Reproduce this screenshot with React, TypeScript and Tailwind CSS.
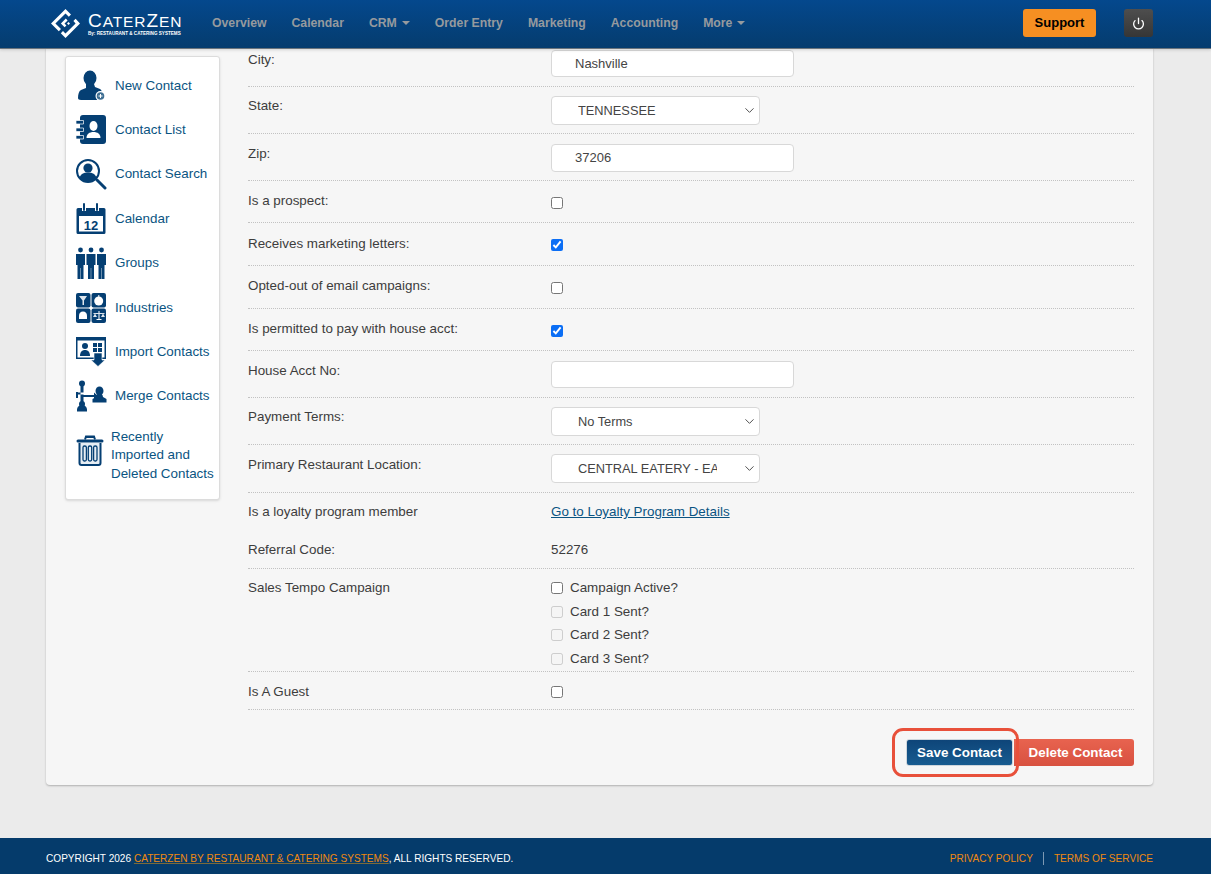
import { ChevronDown, Power } from "lucide-react";
import type { ReactNode } from "react";

const NAV = ["Overview", "Calendar", "CRM", "Order Entry", "Marketing", "Accounting", "More"];

const Logo = () => (
  <div className="flex items-center gap-[8px]">
    <svg width="29" height="29" viewBox="0 0 29 29" fill="#fff">
      <path d="M14.500 0 20 5.500 17.800 7.700 14.500 4.400 4.400 14.500 10 20 7.800 22.300 0 14.500Z" />
      <path d="M24.600 9.700 29 14.500 14.500 29 9.800 24.300 12 22.100 14.500 24.600 24.600 14.500 22.400 12Z" />
      <path d="M14.800 9.600 16.600 11.400 13.500 14.500 15.400 16.400 13.600 18.200 9.900 14.500Z" />
      <path d="M17.500 13 19 14.500 17.500 16 16 14.500Z" />
    </svg>
    <div className="w-[92px] flex flex-col text-white">
      <div className="h-[20px] leading-[20px] whitespace-nowrap tracking-[0.9px]">
        <span className="text-[19px]">C</span>
        <span className="text-[15.500px]">ATER</span>
        <span className="text-[19px]">Z</span>
        <span className="text-[15.500px]">EN</span>
      </div>
      <div className="text-[4.600px] leading-[5px] font-bold whitespace-nowrap">By: RESTAURANT &amp; CATERING SYSTEMS</div>
    </div>
  </div>
);

const Header = () => (
  <header className="relative z-10 h-[48px] shrink-0 flex items-center pl-[51px] pr-[58px] pb-[2px] bg-linear-to-b from-[#04488d] to-[#053c6e] shadow-[0_1px_0_#6b747c,0_2px_3px_rgba(0,0,0,0.15)]">
    <Logo />
    <nav className="ml-[32px] flex items-center gap-[25px] text-[12.250px] font-bold text-[#969a9e]">
      {NAV.map((item) => (
        <span key={item} className="flex items-center gap-[5px] whitespace-nowrap">
          {item}
          {(item === "CRM" || item === "More") && (
            <span className="w-0 h-0 border-x-[4px] border-x-transparent border-t-[4px] border-t-[#969a9e]" />
          )}
        </span>
      ))}
    </nav>
    <button className="ml-auto w-[73px] h-[28px] rounded-[3px] bg-[#f68f22] text-[13px] font-bold text-black">Support</button>
    <button className="ml-[28px] w-[29px] h-[28px] rounded-[3px] bg-linear-to-b from-[#4e4e4e] to-[#363636] flex items-center justify-center text-white">
      <Power size={13} strokeWidth={2.400} />
    </button>
  </header>
);

const NewContactIcon = () => (
  <svg viewBox="0 0 32 32" className="w-[32px] h-[32px]" fill="#053f73">
    <ellipse cx="15" cy="8" rx="6.500" ry="7.500" />
    <path d="M11 14h8l1 3 5 2c2 1 2 4 2 5l-2 6H6c-2 0-3-1-3-2 0-4 1-7 3-8l5-2Z" />
    <circle cx="25.500" cy="26" r="5" fill="#fff" />
    <circle cx="25.500" cy="26" r="3.800" fill="#3f6f93" />
    <path d="M25 24h1v1.500h1.500v1H26V28h-1v-1.500h-1.500v-1H25Z" fill="#fff" />
  </svg>
);

const ContactListIcon = () => (
  <svg viewBox="0 0 32 32" className="w-[32px] h-[32px]">
    <rect x="5" y="1" width="26" height="29" rx="3" fill="#053f73" />
    <path d="M1 6.500h7.500v3.500H1ZM1 14h7.500v3.500H1ZM1 21.500h7.500V25H1Z" fill="#053f73" stroke="#fff" strokeWidth="0.700" />
    <ellipse cx="18.500" cy="12" rx="4" ry="5" fill="#fff" />
    <path d="M11.500 24c0-4 3-6 7-6s7 2 7 6Z" fill="#fff" />
  </svg>
);

const SearchIcon = () => (
  <svg viewBox="0 0 32 32" className="w-[32px] h-[32px]">
    <circle cx="13" cy="13" r="11" fill="none" stroke="#053f73" strokeWidth="2" />
    <circle cx="13" cy="10" r="4.600" fill="#053f73" />
    <path d="M4.500 20c1-4 4-5.500 8.500-5.500S20.500 16 21.500 20C19 22.500 16 24 13 24s-6-1.500-8.500-4Z" fill="#053f73" />
    <path d="M22 22 30 30" stroke="#053f73" strokeWidth="3" strokeLinecap="round" />
  </svg>
);

const CalendarIcon = () => (
  <svg viewBox="0 0 32 32" className="w-[32px] h-[32px]">
    <path d="M3 5h26a1.500 1.500 0 0 1 1.500 1.500v23a1.500 1.500 0 0 1-1.500 1.500H3a1.500 1.500 0 0 1-1.500-1.500v-23A1.500 1.500 0 0 1 3 5Z" fill="#053f73" />
    <rect x="4" y="13" width="24" height="15.500" fill="#fff" />
    <path d="M9 1v7M22 1v7" stroke="#fff" strokeWidth="4" />
    <path d="M9 1v6M22 1v6" stroke="#053f73" strokeWidth="2" strokeLinecap="round" />
    <text x="16" y="26.500" textAnchor="middle" fontSize="13" fontWeight="700" fill="#053f73" fontFamily="Liberation Sans, sans-serif">12</text>
  </svg>
);

const GroupsIcon = () => {
  const person = (x: number) => (
    <g key={x} fill="#053f73">
      <circle cx={x} cy="3" r="2.400" />
      <path d={`M${x - 4.500} 7h9v11h-1.500v14h-2.800V21h-.4v11h-2.800V18h-1.500Z`} />
    </g>
  );
  return (
    <svg viewBox="0 0 32 32" className="w-[32px] h-[32px]">
      {[5.500, 16, 26.500].map(person)}
    </svg>
  );
};

const IndustriesIcon = () => (
  <svg viewBox="0 0 32 32" className="w-[32px] h-[32px]">
    <rect x="1" y="1" width="14.500" height="14.500" rx="2" fill="#053f73" />
    <rect x="16.500" y="1" width="14.500" height="14.500" rx="2" fill="#053f73" />
    <rect x="1" y="16.500" width="14.500" height="14.500" rx="2" fill="#053f73" />
    <rect x="16.500" y="16.500" width="14.500" height="14.500" rx="2" fill="#053f73" />
    <path d="M4 4h8l-3 4.500V13H7.500V8.500Z" fill="#dfe7ee" />
    <circle cx="23.700" cy="9" r="4.500" fill="#fff" />
    <path d="M23.300 3h1v2h-1Z" fill="#fff" />
    <path d="M4 27v-3c0-3 1.500-4.500 4-4.500s4 1.500 4 4.500v3Z" fill="#fff" />
    <path d="M23.500 19h1v8h2v1h-5v-1h2Z" fill="#fff" />
    <path d="M18.500 21h11v1h-11ZM18 25h4l-2-3.500ZM26 25h4l-2-3.500Z" fill="#dfe7ee" />
  </svg>
);

const ImportIcon = () => (
  <svg viewBox="0 0 32 32" className="w-[32px] h-[32px]">
    <rect x="1" y="1" width="30" height="22" fill="#053f73" />
    <rect x="2.500" y="4.500" width="27" height="17" fill="#fff" />
    <circle cx="10" cy="10" r="3" fill="#053f73" />
    <path d="M5 20c0-4 2-6 5-6s5 2 5 6Z" fill="#053f73" />
    <path d="M18 7h4v4h-4ZM23 7h4v4h-4ZM18 12h4v4h-4ZM23 12h4v4h-4Z" fill="#053f73" />
    <path d="M19 17h8v7h3l-7 6.500-7-6.500h3Z" fill="#053f73" stroke="#fff" strokeWidth="0.600" />
  </svg>
);

const MergeIcon = () => (
  <svg viewBox="0 0 32 32" className="w-[32px] h-[32px]" fill="#053f73">
    <circle cx="7" cy="3.500" r="3" />
    <path d="M5.500 6h3v6.500H3v2h5.500V24h-3Z" />
    <path d="M1 12h2v6H1Z" />
    <path d="M8 15h11v-2.500l4 3.500-4 3.500V17H8Z" />
    <path d="M2 30c0-3 2-5 5-5s5 2 5 5v1.500H2Z" />
    <circle cx="7" cy="24" r="3" />
    <ellipse cx="24.500" cy="11" rx="4" ry="4.600" />
    <path d="M21.500 15h6l.5 2 3.500 2v3.500h-14V19l3.500-2Z" />
  </svg>
);

const TrashIcon = () => (
  <svg viewBox="0 0 28 32" className="w-[28px] h-[32px]" fill="none" stroke="#053f73">
    <path d="M10 3h8" strokeWidth="2" />
    <path d="M9 5.500 10 2.500h8l1 3" strokeWidth="2" />
    <path d="M2 7h24" strokeWidth="3" strokeLinecap="round" />
    <path d="M3.500 9v20c0 1 .5 2 2 2h17c1.500 0 2-1 2-2V9" strokeWidth="2" fill="#e6edf3" />
    <rect x="7" y="12" width="3.400" height="15" rx="1.500" strokeWidth="1.300" />
    <rect x="12.300" y="12" width="3.400" height="15" rx="1.500" strokeWidth="1.300" />
    <rect x="17.600" y="12" width="3.400" height="15" rx="1.500" strokeWidth="1.300" />
  </svg>
);

const SIDE_ITEMS: { label: string; icon: ReactNode }[] = [
  { label: "New Contact", icon: <NewContactIcon /> },
  { label: "Contact List", icon: <ContactListIcon /> },
  { label: "Contact Search", icon: <SearchIcon /> },
  { label: "Calendar", icon: <CalendarIcon /> },
  { label: "Groups", icon: <GroupsIcon /> },
  { label: "Industries", icon: <IndustriesIcon /> },
  { label: "Import Contacts", icon: <ImportIcon /> },
  { label: "Merge Contacts", icon: <MergeIcon /> },
];

const Sidebar = () => (
  <aside className="w-[155px] h-[444px] mt-[8px] shrink-0 bg-white border border-[#dcdcdc] rounded-[3px] shadow-sm pt-[6.500px] pl-[9px] text-[13.400px] text-[#0a5482]">
    {SIDE_ITEMS.map((item) => (
      <div key={item.label} className="h-[44.400px] flex items-center gap-[8px]">
        {item.icon}
        <span className="whitespace-nowrap">{item.label}</span>
      </div>
    ))}
    <div className="mt-[9px] flex items-start gap-[7px]">
      <div className="ml-[1px] pt-[6px]"><TrashIcon /></div>
      <span className="w-[105px] leading-[18.700px] whitespace-nowrap">
        Recently<br />Imported and<br />Deleted Contacts
      </span>
    </div>
  </aside>
);

type RowProps = { label: string; className: string; labelClass?: string; children?: ReactNode };

const Row = ({ label, className, labelClass = "", children }: RowProps) => (
  <div className={`grid grid-cols-[303px_1fr] ${className}`}>
    <div className={labelClass}>{label}</div>
    <div>{children}</div>
  </div>
);

const TextField = ({ value, className }: { value: string; className: string }) => (
  <input
    readOnly
    value={value}
    className={`block w-[243px] bg-white border border-[#d8d8d8] rounded-[4px] pl-[23px] text-[13px] text-[#444] outline-none ${className}`}
  />
);

const SelectField = ({ value }: { value: string }) => (
  <div className="relative w-[209px] h-[29px]">
    <select
      value={value}
      onChange={() => {}}
      className="block w-full h-full appearance-none bg-white border border-[#d8d8d8] rounded-[4px] pl-[26px] pr-[42px] text-[12.800px] text-[#444] outline-none"
    >
      <option>{value}</option>
    </select>
    <ChevronDown size={15} strokeWidth={1.500} className="absolute right-[3px] top-[7px] text-[#444]" />
  </div>
);

const Check = ({ checked = false, disabled = false }: { checked?: boolean; disabled?: boolean }) => (
  <input
    type="checkbox"
    readOnly
    checked={checked}
    disabled={disabled}
    className="block m-0 w-[12px] h-[12px] accent-[#0b6ef5]"
  />
);

const SentRow = ({ label, disabled = false }: { label: string; disabled?: boolean }) => (
  <div className="h-[23.700px] flex items-center gap-[7px]">
    <Check disabled={disabled} />
    <span>{label}</span>
  </div>
);

const dashed = "border-b border-dotted border-[#c2c2c2]";

const ContactForm = () => (
  <section className="flex-1 ml-[28px] text-[13.400px] leading-[20px] text-[#3d3d3d]">
    <Row label="City:" className={`h-[39px] pt-[2px] ${dashed}`}>
      <TextField value="Nashville" className="h-[27px]" />
    </Row>
    <Row label="State:" className={`h-[47px] pt-[9px] ${dashed}`}>
      <SelectField value="TENNESSEE" />
    </Row>
    <Row label="Zip:" className={`h-[47px] pt-[10px] ${dashed}`}>
      <TextField value="37206" className="h-[28px] pb-[2px]" />
    </Row>
    <Row label="Is a prospect:" className={`h-[42px] pt-[9px] ${dashed}`} labelClass="pt-[1px]">
      <div className="pt-[7px]"><Check /></div>
    </Row>
    <Row label="Receives marketing letters:" className={`h-[43px] pt-[10px] ${dashed}`} labelClass="pt-[1px]">
      <div className="pt-[6px]"><Check checked /></div>
    </Row>
    <Row label="Opted-out of email campaigns:" className={`h-[43px] pt-[9px] ${dashed}`} labelClass="pt-[1px]">
      <div className="pt-[7px]"><Check /></div>
    </Row>
    <Row label="Is permitted to pay with house acct:" className={`h-[42px] pt-[9px] ${dashed}`} labelClass="pt-[1px]">
      <div className="pt-[7px]"><Check checked /></div>
    </Row>
    <Row label="House Acct No:" className={`h-[47px] pt-[10px] ${dashed}`}>
      <TextField value="" className="h-[27px]" />
    </Row>
    <Row label="Payment Terms:" className={`h-[47px] pt-[9px] ${dashed}`}>
      <SelectField value="No Terms" />
    </Row>
    <Row label="Primary Restaurant Location:" className={`h-[48px] pt-[9px] ${dashed}`} labelClass="pt-[1px]">
      <SelectField value="CENTRAL EATERY - EAST" />
    </Row>
    <Row label="Is a loyalty program member" className="h-[38px] pt-[9px]">
      <a className="text-[#0a5482] underline">Go to Loyalty Program Details</a>
    </Row>
    <Row label="Referral Code:" className={`h-[38px] pt-[9px] ${dashed}`}>
      52276
    </Row>
    <Row label="Sales Tempo Campaign" className={`h-[103px] pt-[9px] ${dashed}`}>
      <div className="-mt-[2px]">
        <SentRow label="Campaign Active?" />
        <SentRow label="Card 1 Sent?" disabled />
        <SentRow label="Card 2 Sent?" disabled />
        <SentRow label="Card 3 Sent?" disabled />
      </div>
    </Row>
    <Row label="Is A Guest" className={`h-[38px] pt-[10px] ${dashed}`}>
      <div className="pt-[4px]"><Check /></div>
    </Row>
    <div className="relative mt-[29px] flex justify-end font-bold text-white text-[13.400px] [text-shadow:0_1px_1px_rgba(0,0,0,0.4)]">
      <button className="w-[107px] mr-[1px] h-[27px] rounded-[3px] border border-[#cfd6dc] bg-linear-to-b from-[#0e4579] to-[#185c90]">Save Contact</button>
      <button className="w-[120px] pl-[3px] h-[27px] rounded-r-[3px] bg-linear-to-b from-[#e8634f] to-[#d85140]">Delete Contact</button>
      <div className="absolute -top-[11px] right-[115px] w-[127px] h-[49px] rounded-[11px] border-[3.500px] border-[#e8503a] pointer-events-none" />
    </div>
  </section>
);

const Footer = () => (
  <footer className="mt-auto h-[36px] shrink-0 bg-[#053b6b] pl-[46px] pr-[58px] pt-[5px] flex items-center justify-between text-[10.100px] text-white">
    <div className="whitespace-nowrap">
      COPYRIGHT 2026 <a className="text-[#f0890f] underline decoration-[#7a6a3a]">CATERZEN BY RESTAURANT &amp; CATERING SYSTEMS</a>, ALL RIGHTS RESERVED.
    </div>
    <div className="flex items-center text-[#f0890f]">
      <a>PRIVACY POLICY</a>
      <span className="mx-[10px] w-px h-[13px] bg-[#7d99b3]" />
      <a>TERMS OF SERVICE</a>
    </div>
  </footer>
);

export default function App() {
  return (
    <div className="min-h-screen flex flex-col bg-[#ebebeb] font-['Liberation_Sans',Arial,sans-serif]">
      <Header />
      <main className="pl-[46px] pr-[58px] shrink-0">
        <div className="h-[737px] flex px-[19px] bg-[#f6f6f6] rounded-b-[4px] shadow-[0_1px_2px_rgba(0,0,0,0.25)]">
          <Sidebar />
          <ContactForm />
        </div>
      </main>
      <Footer />
    </div>
  );
}
